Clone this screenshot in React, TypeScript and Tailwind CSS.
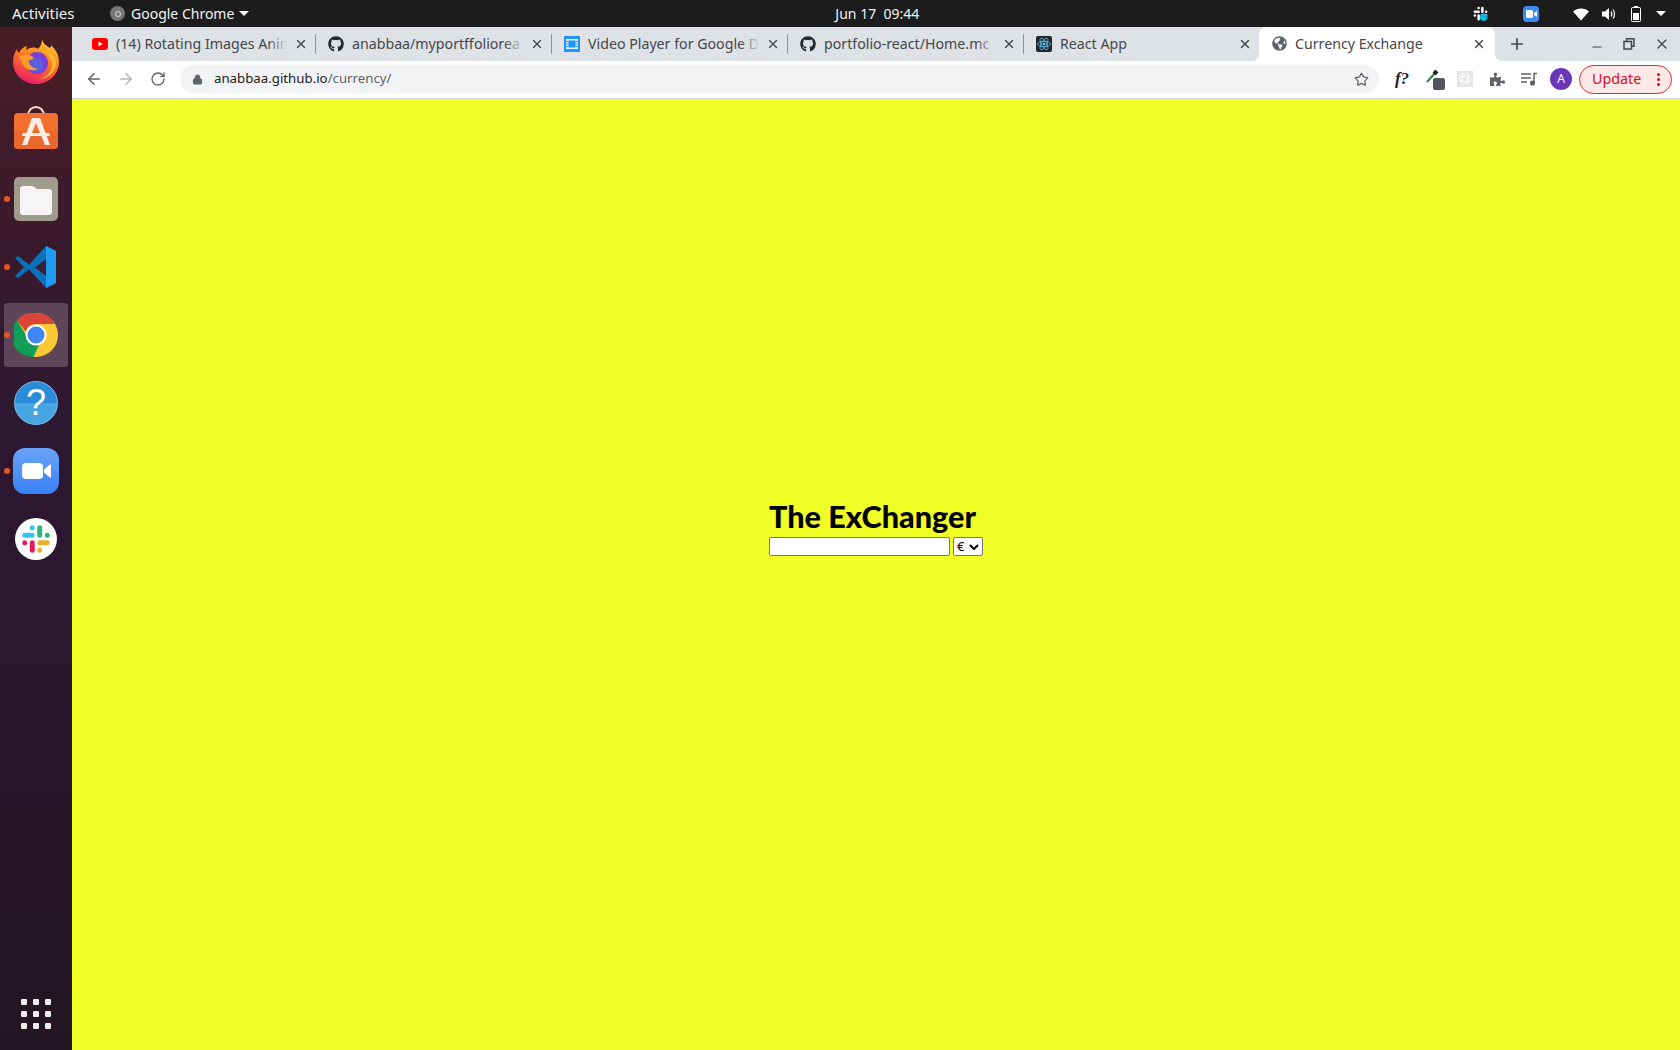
import React from "react";
import { FaGithub, FaPuzzlePiece, FaGlobeAmericas } from "react-icons/fa";
import { ArrowLeft, ArrowRight, RotateCw, Lock, Star, X, Plus, Minus } from "lucide-react";

function YouTube() {
  return (
    <svg width="16" height="16" viewBox="0 0 16 16">
      <rect x="0" y="2" width="16" height="12" rx="3" fill="#f00" />
      <path d="M6.5 5.5v5l4.2-2.5z" fill="#fff" />
    </svg>
  );
}
function VideoIcon() {
  return (
    <svg width="16" height="16" viewBox="0 0 16 16">
      <rect width="16" height="16" rx="1" fill="#2196f3" />
      <rect x="2" y="3" width="12" height="10" fill="#e3f2fd" />
      <rect x="4.5" y="4.5" width="7" height="7" fill="#2196f3" />
      <path d="M2 5.5h2.5M2 8h2.5M2 10.5h2.5M11.5 5.5H14M11.5 8H14M11.5 10.5H14" stroke="#2196f3" strokeWidth="1" />
    </svg>
  );
}
function ReactIcon() {
  return (
    <svg width="16" height="16" viewBox="0 0 16 16">
      <rect width="16" height="16" rx="2" fill="#20232a" />
      <g fill="none" stroke="#61dafb" strokeWidth="0.7">
        <ellipse cx="8" cy="8" rx="6.5" ry="2.6" />
        <ellipse cx="8" cy="8" rx="6.5" ry="2.6" transform="rotate(60 8 8)" />
        <ellipse cx="8" cy="8" rx="6.5" ry="2.6" transform="rotate(120 8 8)" />
      </g>
      <circle cx="8" cy="8" r="1.3" fill="#61dafb" />
    </svg>
  );
}

function Tab({ icon, title, active, sep }: { icon: React.ReactNode; title: string; active?: boolean; sep?: boolean }) {
  return (
    <div className={`relative flex h-[34px] w-[236px] shrink-0 items-center pb-[1px] pl-[12px] ${active ? "-ml-px rounded-t-[8px] bg-white pr-[9px]" : "pr-[8px]"}`}>
      <span className="flex h-4 w-4 shrink-0 items-center justify-center">{icon}</span>
      <span className="relative ml-[8px] flex-1 overflow-hidden whitespace-nowrap text-[14.2px] text-[#45474b]">
        {title}
        {!active && <span className="absolute inset-y-0 right-0 w-5 bg-gradient-to-r from-transparent to-[#dee1e6]" />}
      </span>
      <X size={14} strokeWidth={2.4} className="ml-[6px] shrink-0 text-[#45474b]" />
      {sep && <span className="absolute right-0 top-[7px] h-[20px] w-px bg-[#8f9297]" />}
      {active && (
        <>
          <span className="absolute -left-2 bottom-0 h-2 w-2 bg-[radial-gradient(circle_at_0_0,transparent_8px,white_8.5px)]" />
          <span className="absolute -right-2 bottom-0 h-2 w-2 bg-[radial-gradient(circle_at_100%_0,transparent_8px,white_8.5px)]" />
        </>
      )}
    </div>
  );
}

function Firefox() {
  return (
    <svg width="46" height="46" viewBox="0 2 46 46" className="overflow-visible">
      <defs>
        <linearGradient id="ff" x1="0.7" y1="0" x2="0.3" y2="1">
          <stop offset="0" stopColor="#ffcc2e" />
          <stop offset="0.45" stopColor="#ff7a1f" />
          <stop offset="1" stopColor="#e8186f" />
        </linearGradient>
      </defs>
      <path d="M29 1c1 5 5 7 8 9 1-1 1-2 1-3 5 5 8 10 8 17 0 12-10 22-23 22S0 36 0 24c0-6 2-10 4-13 0 2 1 3 2 4 1-3 4-6 8-7-1 2-1 3 0 4 3-3 8-3 11-1 3-3 4-6 4-10z" fill="url(#ff)" />
      <circle cx="24" cy="25" r="11" fill="#7a3ed6" />
      <circle cx="23" cy="27" r="7.5" fill="#5b5fdc" />
      <path d="M6 19c4-3 10-3 14 0 2 2-2 3-4 3-1 4 3 8 9 9-6 3-14 0-16-6-1-2-2-4-3-6z" fill="#ff9a2e" />
      <path d="M28 13c6 1 11 7 11 13 0 8-6 14-13 15 9 0 17-7 17-16 0-7-6-12-15-12z" fill="#ffb52e" />
    </svg>
  );
}
function Store() {
  return (
    <svg width="44" height="46" viewBox="0 3 44 46" className="overflow-visible">
      <path d="M14 11c0-12 16-12 16 0" fill="none" stroke="#f6d9bf" strokeWidth="2" />
      <rect x="0" y="8" width="44" height="36" rx="4" fill="#f4702f" />
      <rect x="0" y="26" width="44" height="18" rx="4" fill="#e9682e" />
      <path d="M18 13h8l10 27h-5l-9-22-9 22H8z" fill="#fbeee5" />
      <rect x="8" y="28" width="28" height="3" rx="1.5" fill="#fbeee5" />
    </svg>
  );
}
function Files() {
  return (
    <svg width="44" height="44" viewBox="0 0 44 44">
      <rect width="44" height="44" rx="5" fill="#a09c8c" />
      <path d="M6 12a3 3 0 0 1 3-3h10l4 3h12a3 3 0 0 1 3 3v20a3 3 0 0 1-3 3H9a3 3 0 0 1-3-3z" fill="#f6f5f3" />
    </svg>
  );
}
function VSCode() {
  return (
    <svg width="44" height="44" viewBox="0 0 44 44">
      <path d="M1 13l3-2 11 8.5L32 1l10 5v32l-10 5-17-18.5L4 33l-3-2 9-9z" fill="#0a70b8" />
      <path d="M32 1l10 5v32l-10 5V14z" fill="#1f9cf0" />
      <path d="M32 14v17l-11-8.500z" fill="#3a2030" />
    </svg>
  );
}
function Chrome() {
  return (
    <svg width="44" height="44" viewBox="0 0 44 44">
      <circle cx="22" cy="22" r="22" fill="#fcc934" />
      <path d="M22 0a22 22 0 0 1 19 11H22a11 11 0 0 0-10.500 7.500L3 7A22 22 0 0 1 22 0z" fill="#db4437" />
      <path d="M3 7l10 17a10 10 0 0 0 12 8L19.500 44A22 22 0 0 1 3 7z" fill="#0f9d58" />
      <circle cx="22" cy="22" r="10.500" fill="#fff" />
      <circle cx="22" cy="22" r="8.500" fill="#4285f4" />
    </svg>
  );
}
function Help() {
  return (
    <div className="flex h-[44px] w-[44px] items-center justify-center rounded-full border border-[#7cc0ea] bg-[linear-gradient(#2a8cd8_50%,#47a6e2_50%)] font-['Liberation_Sans',sans-serif] text-[36px] leading-none text-white">
      ?
    </div>
  );
}
function Zoom() {
  return (
    <svg width="46" height="46" viewBox="0 0 46 46">
      <defs>
        <linearGradient id="zm" x1="0" y1="0" x2="0" y2="1">
          <stop offset="0" stopColor="#6aa5fb" />
          <stop offset="1" stopColor="#3a80f6" />
        </linearGradient>
      </defs>
      <rect width="46" height="46" rx="12" fill="url(#zm)" />
      <rect x="9" y="15" width="21" height="16" rx="4" fill="#fff" />
      <path d="M31 21.500l6-5c.500-.400 1-.200 1 .500v12c0 .700-.500.900-1 .500l-6-5z" fill="#fff" />
    </svg>
  );
}
function SlackMark({ size }: { size: number }) {
  return (
    <svg width={size} height={size} viewBox="0 0 24 24">
      <g strokeWidth="4" strokeLinecap="round" fill="none">
        <path d="M9 3v0M3 9h6" stroke="#36c5f0" />
        <path d="M15 9V3M21 9v0" stroke="#2eb67d" />
        <path d="M15 15h6M15 21v0" stroke="#ecb22e" />
        <path d="M9 15v6M3 15v0" stroke="#e01e5a" />
      </g>
    </svg>
  );
}
function Slack() {
  return (
    <div className="flex h-[42px] w-[42px] items-center justify-center rounded-full bg-white">
      <SlackMark size={30} />
    </div>
  );
}

function DockItem({ children, dot, active }: { children: React.ReactNode; dot?: boolean; active?: boolean }) {
  return (
    <div className="relative flex h-[68px] w-[72px] items-center justify-center">
      {active && <span className="absolute left-[4px] top-[2px] h-[64px] w-[64px] rounded-[3px] bg-[#5e4558]" />}
      {dot && <span className="absolute left-[4px] top-[31px] h-[6px] w-[6px] rounded-full bg-[#e95420]" />}
      <span className="relative flex">{children}</span>
    </div>
  );
}

function Wifi() {
  return (
    <svg width="16" height="14" viewBox="0 0 16 14">
      <path d="M0 4.500C4.500.500 11.500.500 16 4.500L8 13.500z" fill="#fff" />
    </svg>
  );
}
function Speaker() {
  return (
    <svg width="15" height="14" viewBox="0 0 15 14" fill="none">
      <path d="M0 4.500h3L7 1v12L3 9.500H0z" fill="#fff" />
      <path d="M9 4.500c1 1.500 1 3.500 0 5M11 2.500c2 2.500 2 6.500 0 9" stroke="#fff" strokeWidth="1.200" />
    </svg>
  );
}
function Battery() {
  return (
    <svg width="10" height="16" viewBox="0 0 10 16">
      <rect x="3" y="0" width="4" height="2" fill="#fff" />
      <rect x="0.500" y="1.500" width="9" height="14" rx="1" fill="none" stroke="#fff" />
      <rect x="2" y="7" width="6" height="7" fill="#fff" />
    </svg>
  );
}
function Caret({ className }: { className?: string }) {
  return <span className={`h-0 w-0 border-x-[5px] border-t-[5px] border-x-transparent border-t-white ${className ?? ""}`} />;
}

export default function App() {
  return (
    <div className="flex h-[1050px] w-[1680px] flex-col overflow-hidden font-['Noto_Sans',sans-serif]">
      {/* Top bar */}
      <div className="flex h-[27px] shrink-0 items-center bg-[#1c1c1c] text-[14px] text-[#f2f2f2]">
        <span className="ml-[12px] w-[98px] text-[15px]">Activities</span>
        <span className="flex h-[15px] w-[15px] items-center justify-center rounded-full bg-[#777]">
          <span className="h-[6px] w-[6px] rounded-full border border-[#ddd]" />
        </span>
        <span className="ml-[6px]">Google Chrome</span>
        <Caret className="ml-[5px]" />
        <span className="ml-[586px] whitespace-pre">Jun 17  09:44</span>
        <div className="ml-auto flex items-center">
          <span className="relative flex">
            <svg width="15" height="15" viewBox="0 0 24 24">
              <g strokeWidth="4" strokeLinecap="round" fill="none" stroke="#fff">
                <path d="M9 3v0M3 9h6M15 9V3M21 9v0M15 15h6M9 15v6M3 15v0" />
              </g>
              <circle cx="17" cy="18" r="6" fill="#12b5de" />
            </svg>
          </span>
          <span className="ml-[35px] flex h-[16px] w-[16px] items-center justify-center rounded-[4px] bg-[#3d8bf5]">
            <svg width="11" height="8" viewBox="0 0 11 8"><rect width="7" height="8" rx="1.500" fill="#fff" /><path d="M8 3l3-2v6L8 5z" fill="#fff" /></svg>
          </span>
          <span className="ml-[34px] flex"><Wifi /></span>
          <span className="ml-[13px] flex"><Speaker /></span>
          <span className="ml-[14px] flex"><Battery /></span>
          <Caret className="ml-[15px] mr-[14px] border-x-[4.500px]" />
        </div>
      </div>

      <div className="flex flex-1">
        {/* Dock */}
        <div className="flex w-[72px] shrink-0 flex-col bg-[linear-gradient(#4a1d26,#2f1830_35%,#2c1730_55%,#221521)] pt-[2px]">
          <DockItem><Firefox /></DockItem>
          <DockItem><Store /></DockItem>
          <DockItem dot><Files /></DockItem>
          <DockItem dot><VSCode /></DockItem>
          <DockItem dot active><Chrome /></DockItem>
          <DockItem><Help /></DockItem>
          <DockItem dot><Zoom /></DockItem>
          <DockItem><Slack /></DockItem>
          <div className="mt-auto mb-[21px] grid grid-cols-3 justify-items-center gap-x-[6px] gap-y-[6px] self-center">
            {Array.from({ length: 9 }).map((_, i) => (
              <span key={i} className="h-[6px] w-[6px] rounded-[1px] bg-[#eeeeee]" />
            ))}
          </div>
        </div>

        {/* Chrome */}
        <div className="flex flex-1 flex-col">
          <div className="flex h-[34px] shrink-0 items-center bg-[#dee1e6] pl-[8px] text-[#45474b]">
            <Tab icon={<YouTube />} title="(14) Rotating Images Anin" sep />
            <Tab icon={<FaGithub size={16} color="#24292e" />} title="anabbaa/myportffoliorea" sep />
            <Tab icon={<VideoIcon />} title="Video Player for Google D" sep />
            <Tab icon={<FaGithub size={16} color="#24292e" />} title="portfolio-react/Home.mc" sep />
            <Tab icon={<ReactIcon />} title="React App" />
            <Tab icon={<FaGlobeAmericas size={15} color="#5f6368" />} title="Currency Exchange" active />
            <Plus size={18} strokeWidth={2.2} className="ml-[13px] text-[#45474b]" />
            <Minus size={14} strokeWidth={2} className="ml-[64px] mt-[6px] text-[#45474b]" />
            <svg width="12" height="12" viewBox="0 0 12 12" fill="none" stroke="#45474b" strokeWidth="1.500" className="ml-[19px]">
              <rect x="3.500" y="0.750" width="7.500" height="7.500" />
              <rect x="1" y="3.500" width="7.500" height="7.500" fill="#dee1e6" />
            </svg>
            <X size={16} strokeWidth={2} className="ml-[19px] text-[#45474b]" />
          </div>

          <div className="flex h-[37px] shrink-0 items-center bg-white pb-[1px] text-[#5f6368]">
            <ArrowLeft size={18} strokeWidth={2} className="ml-[13px]" />
            <ArrowRight size={18} strokeWidth={2} className="ml-[14px] text-[#b4b6ba]" />
            <RotateCw size={16} strokeWidth={2} className="ml-[15px]" />
            <div className="ml-[14px] flex h-[28px] w-[1199px] items-center rounded-full bg-[#f1f3f4]">
              <Lock size={11} fill="#5f6368" className="ml-[12px]" />
              <span className="ml-[11px] text-[13.25px] text-[#202124]">anabbaa.github.io<span className="text-[#5f6368]">/currency/</span></span>
              <Star size={15} strokeWidth={2} className="ml-auto mr-[10px]" />
            </div>
            <span className="ml-[13px] w-[20px] text-center font-['Liberation_Serif',serif] text-[17px] font-bold italic text-[#202124]">f?</span>
            <span className="relative ml-[13px] flex h-[22px] w-[20px]">
              <svg width="16" height="16" viewBox="0 0 16 16"><path d="M2 14l8-9" stroke="#2b8a3e" strokeWidth="2" /><path d="M9 3l3 3" stroke="#222" strokeWidth="4" /></svg>
              <span className="absolute bottom-0 right-0 h-[12px] w-[12px] rounded-[2px] bg-[#55535f]" />
            </span>
            <span className="ml-[12px] flex h-[16px] w-[16px] items-center justify-center bg-[#e4e4e4]">
              <svg width="14" height="14" viewBox="0 0 16 16" fill="none" stroke="#fff" strokeWidth="1">
                <ellipse cx="8" cy="8" rx="7" ry="3" /><ellipse cx="8" cy="8" rx="7" ry="3" transform="rotate(60 8 8)" /><ellipse cx="8" cy="8" rx="7" ry="3" transform="rotate(120 8 8)" />
              </svg>
            </span>
            <FaPuzzlePiece size={15} className="ml-[17px]" />
            <svg width="16" height="14" viewBox="0 0 16 14" fill="none" stroke="#5f6368" strokeWidth="1.500" className="ml-[16px]">
              <path d="M0 2h10M0 6h10M0 10h6" />
              <path d="M13 10V1.500h3" />
              <circle cx="11.500" cy="11" r="1.800" fill="#5f6368" />
            </svg>
            <span className="ml-[13px] flex h-[22px] w-[22px] items-center justify-center rounded-full bg-[#6a36b8] text-[12px] text-white">A</span>
            <div className="ml-[7px] flex h-[29px] w-[93px] items-center rounded-full border border-[#d93025] bg-[#fce8e6] pl-[12px] text-[14.3px] text-[#d50f25]">
              Update
              <span className="ml-auto mr-[11px] flex flex-col gap-[2px]">
                <span className="h-[3px] w-[3px] rounded-full bg-[#d50f25]" />
                <span className="h-[3px] w-[3px] rounded-full bg-[#d50f25]" />
                <span className="h-[3px] w-[3px] rounded-full bg-[#d50f25]" />
              </span>
            </div>
          </div>
          <div className="h-px shrink-0 bg-[#d6d8da]" />

          {/* Page */}
          <div className="flex flex-1 items-center justify-center bg-[#f0ff26] pb-[92px]">
            <div className="flex flex-col">
              <h1 className="-mt-[2px] font-['Lato',sans-serif] text-[30.6px] font-black leading-[35px] text-black">The ExChanger</h1>
              <div className="mt-[3px] flex items-center gap-[3px]">
                <input type="text" aria-label="amount" className="h-[19px] w-[181px] rounded-[2px] border border-[#767676] bg-white" />
                <div className="flex h-[19px] w-[30px] items-center justify-between rounded-[2px] border border-[#767676] bg-white px-[3px] text-[13px] text-black">
                  <span>€</span>
                  <svg width="10" height="6" viewBox="0 0 10 6" fill="none" stroke="#000" strokeWidth="2"><path d="M1 1l4 4 4-4" /></svg>
                </div>
              </div>
            </div>
          </div>
        </div>
      </div>
    </div>
  );
}
